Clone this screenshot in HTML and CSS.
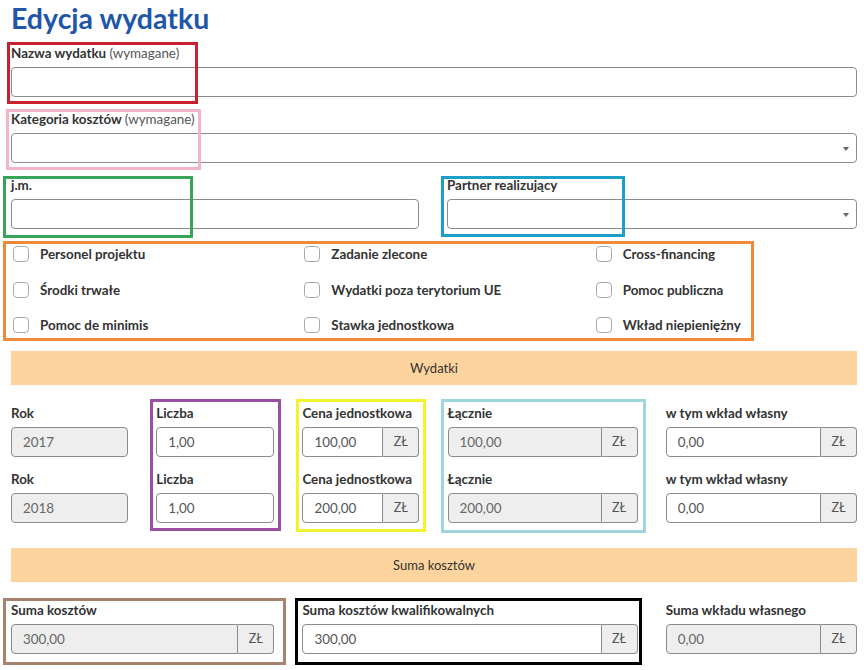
FILE: index.html
```html
<!DOCTYPE html>
<html lang="pl">
<head>
<meta charset="utf-8">
<title>Edycja wydatku</title>
<link rel="stylesheet" href="styles.css">
</head>
<body>
<div class="page">
  <h1 class="title">Edycja wydatku</h1>

  <div class="field">
    <label class="lbl">Nazwa wydatku <span class="req">(wymagane)</span></label>
    <input class="inp" type="text">
  </div>

  <div class="field">
    <label class="lbl">Kategoria kosztów <span class="req">(wymagane)</span></label>
    <div class="sel"><select class="inp"></select></div>
  </div>

  <div class="pair">
    <div class="field">
      <label class="lbl">j.m.</label>
      <input class="inp" type="text">
    </div>
    <div class="field">
      <label class="lbl">Partner realizujący</label>
      <div class="sel"><select class="inp"></select></div>
    </div>
  </div>

  <div class="checks">
    <label class="chk"><input type="checkbox"><span>Personel projektu</span></label>
    <label class="chk"><input type="checkbox"><span>Zadanie zlecone</span></label>
    <label class="chk"><input type="checkbox"><span>Cross-financing</span></label>
    <label class="chk"><input type="checkbox"><span>Środki trwałe</span></label>
    <label class="chk"><input type="checkbox"><span>Wydatki poza terytorium UE</span></label>
    <label class="chk"><input type="checkbox"><span>Pomoc publiczna</span></label>
    <label class="chk"><input type="checkbox"><span>Pomoc de minimis</span></label>
    <label class="chk"><input type="checkbox"><span>Stawka jednostkowa</span></label>
    <label class="chk"><input type="checkbox"><span>Wkład niepieniężny</span></label>
  </div>

  <div class="bar">Wydatki</div>

  <div class="grid5">
    <div class="field"><label class="lbl">Rok</label><input class="inp dis" type="text" value="2017" disabled></div>
    <div class="field"><label class="lbl">Liczba</label><input class="inp" type="text" value="1,00"></div>
    <div class="field"><label class="lbl">Cena jednostkowa</label><div class="grp"><input class="inp" type="text" value="100,00"><span class="addon">ZŁ</span></div></div>
    <div class="field"><label class="lbl">Łącznie</label><div class="grp"><input class="inp dis" type="text" value="100,00" disabled><span class="addon">ZŁ</span></div></div>
    <div class="field"><label class="lbl">w tym wkład własny</label><div class="grp"><input class="inp" type="text" value="0,00"><span class="addon">ZŁ</span></div></div>

    <div class="field"><label class="lbl">Rok</label><input class="inp dis" type="text" value="2018" disabled></div>
    <div class="field"><label class="lbl">Liczba</label><input class="inp" type="text" value="1,00"></div>
    <div class="field"><label class="lbl">Cena jednostkowa</label><div class="grp"><input class="inp" type="text" value="200,00"><span class="addon">ZŁ</span></div></div>
    <div class="field"><label class="lbl">Łącznie</label><div class="grp"><input class="inp dis" type="text" value="200,00" disabled><span class="addon">ZŁ</span></div></div>
    <div class="field"><label class="lbl">w tym wkład własny</label><div class="grp"><input class="inp" type="text" value="0,00"><span class="addon">ZŁ</span></div></div>
  </div>

  <div class="bar bar-sum">Suma kosztów</div>

  <div class="grid5">
    <div class="field span2"><label class="lbl">Suma kosztów</label><div class="grp"><input class="inp dis" type="text" value="300,00" disabled><span class="addon">ZŁ</span></div></div>
    <div class="field span2"><label class="lbl">Suma kosztów kwalifikowalnych</label><div class="grp"><input class="inp" type="text" value="300,00"><span class="addon">ZŁ</span></div></div>
    <div class="field"><label class="lbl">Suma wkładu własnego</label><div class="grp"><input class="inp dis" type="text" value="0,00" disabled><span class="addon">ZŁ</span></div></div>
  </div>

  <div class="mark m-red"></div>
  <div class="mark m-pink"></div>
  <div class="mark m-green"></div>
  <div class="mark m-blue"></div>
  <div class="mark m-orange"></div>
  <div class="mark m-purple"></div>
  <div class="mark m-yellow"></div>
  <div class="mark m-lblue"></div>
  <div class="mark m-brown"></div>
  <div class="mark m-black"></div>
</div>
</body>
</html>
```

FILE: styles.css
```css
* { box-sizing: border-box; }
html, body { margin: 0; padding: 0; background: #fff; }
body {
  font-family: Lato, "Open Sans", "DejaVu Sans", sans-serif;
  color: #333;
  font-size: 13px;
}
.page {
  position: relative;
  width: 868px;
  height: 670px;
  padding: 0 11px;
  overflow: hidden;
}
.title {
  margin: 0 0 8px;
  height: 36px;
  font-size: 28.5px;
  line-height: 36px;
  font-weight: 700;
  color: #1f56a8;
}
.field {
  display: flex;
  flex-direction: column;
  margin-bottom: 13px;
}
.lbl {
  display: block;
  font-size: 13.4px;
  font-weight: 700;
  line-height: 18px;
  margin-bottom: 5px;
  color: #333;
  white-space: nowrap;
}
.req { font-weight: 400; color: #555; }
.inp {
  display: block;
  width: 100%;
  height: 30px;
  margin: 0;
  padding: 0 11px;
  border: 1px solid #8c8c8c;
  border-radius: 4px;
  background: #fff;
  font: 400 13.4px Lato, "Open Sans", sans-serif;
  color: #555;
  appearance: none;
  -webkit-appearance: none;
  outline: none;
}
.inp.dis { background: #eee; color: #666; }
.sel { position: relative; }
.sel::after {
  content: "";
  position: absolute;
  right: 8px;
  top: 14px;
  border-left: 3px solid transparent;
  border-right: 3px solid transparent;
  border-top: 4px solid #666;
}
.pair {
  display: grid;
  grid-template-columns: 408px 1fr;
  column-gap: 28px;
}
.pair .field { margin-bottom: 0; }
.checks {
  display: grid;
  grid-template-columns: repeat(3, 1fr);
  column-gap: 28px;
  row-gap: 15.5px;
  margin: 15px 0 16px;
}
.chk {
  display: flex;
  align-items: center;
  height: 20px;
  padding-left: 2px;
  font-weight: 700;
  font-size: 13.4px;
  color: #333;
}
.chk input {
  appearance: none;
  -webkit-appearance: none;
  width: 16px;
  height: 16px;
  margin: 0 11px 0 0;
  border: 1px solid #aaa;
  border-radius: 4px;
  background: #fff;
}
.bar {
  height: 34px;
  line-height: 34px;
  background: #fdd49e;
  text-align: center;
  font-size: 13px;
  color: #333;
  margin-bottom: 19px;
}
.bar-sum { margin-top: 12px; }
.grid5 {
  display: grid;
  grid-template-columns: 117px 118px 117px 190px 1fr;
  column-gap: 28.2px;
}
.span2 { grid-column: span 2; }
.grp { display: flex; }
.grp .inp {
  flex: 1;
  min-width: 0;
  border-top-right-radius: 0;
  border-bottom-right-radius: 0;
}
.addon {
  flex: 0 0 36px;
  height: 30px;
  line-height: 28px;
  text-align: center;
  border: 1px solid #8c8c8c;
  border-left: 0;
  border-radius: 0 4px 4px 0;
  background: #eee;
  color: #555;
  font-size: 12.5px;
}
.mark {
  position: absolute;
  border: 3px solid;
  pointer-events: none;
}
.m-red { left: 7px; top: 42px; width: 191px; height: 62px; border-color: #c8202f; }
.m-pink { left: 6px; top: 109px; width: 195px; height: 61px; border-color: #f1b5c8; }
.m-green { left: 3px; top: 176px; width: 190px; height: 62px; border-color: #37a457; }
.m-blue { left: 441px; top: 176px; width: 184px; height: 61px; border-color: #1aa0c9; }
.m-orange { left: 3px; top: 241px; width: 751px; height: 100px; border-color: #ee8a3c; }
.m-purple { left: 150px; top: 399px; width: 131px; height: 132px; border-color: #9b4fa0; }
.m-yellow { left: 296px; top: 399px; width: 130px; height: 133px; border-color: #f3f22e; }
.m-lblue { left: 441px; top: 399px; width: 205px; height: 134px; border-color: #9fd5dd; }
.m-brown { left: 3px; top: 598px; width: 283px; height: 67px; border-color: #a7836e; }
.m-black { left: 295px; top: 598px; width: 347px; height: 67px; border-color: #000; }
```
